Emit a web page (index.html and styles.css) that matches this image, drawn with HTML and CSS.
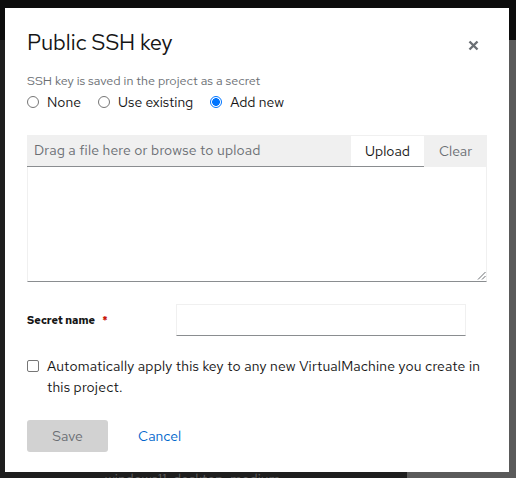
FILE: index.html
```html
<!DOCTYPE html>
<html>
<head>
<meta charset="utf-8">
<link rel="stylesheet" href="styles.css">
</head>
<body>
<div class="page">
  <div class="mast"></div>
  <div class="main">
    <div class="dark-col"><span class="bg-text">windows11-desktop-medium</span></div>
    <div class="light-col"></div>
  </div>
</div>
<div class="modal">
  <div class="modal-head">
    <h1 class="title">Public SSH key</h1>
    <button class="close" aria-label="Close">
      <svg width="11" height="11" viewBox="0 0 11 11"><path d="M1.5 1.5 L9.5 9.5 M9.5 1.5 L1.5 9.5" stroke="#6a6e73" stroke-width="2.4" stroke-linecap="butt"/></svg>
    </button>
  </div>
  <p class="desc">SSH key is saved in the project as a secret</p>
  <div class="radios">
    <label class="radio"><span class="dot"></span>None</label>
    <label class="radio"><span class="dot"></span>Use existing</label>
    <label class="radio"><span class="dot checked"></span>Add new</label>
  </div>
  <div class="upload">
    <div class="upload-bar">
      <div class="filename">Drag a file here or browse to upload</div>
      <div class="btn-upload">Upload</div>
      <div class="btn-clear">Clear</div>
    </div>
    <div class="textarea">
      <svg class="grip" width="9" height="9" viewBox="0 0 9 9"><path d="M8.5 1 L1 8.5 M8.5 5 L5 8.5" stroke="#6a6e73" stroke-width="1"/></svg>
    </div>
  </div>
  <div class="field">
    <div class="label">Secret name <span class="req">*</span></div>
    <div class="input"></div>
  </div>
  <label class="check"><span class="box"></span><span class="check-text">Automatically apply this key to any new VirtualMachine you create in this project.</span></label>
  <div class="actions">
    <button class="save">Save</button>
    <button class="cancel">Cancel</button>
  </div>
</div>
</body>
</html>
```
FILE: styles.css
```css
* { box-sizing: border-box; }
html, body { margin: 0; padding: 0; }
body {
  width: 516px;
  height: 478px;
  overflow: hidden;
  font-family: "Red Hat Text", "Noto Sans", sans-serif;
  background: #1c1c1c;
}
.page {
  display: grid;
  grid-template-rows: 40px 1fr;
  height: 478px;
}
.mast { background: #0c0c0c; }
.main {
  display: grid;
  grid-template-columns: 407px 1fr;
}
.dark-col {
  background: #1e1e1e;
  display: flex;
  align-items: flex-end;
  padding-left: 105px;
}
.bg-text {
  color: #5d5d5d;
  font-size: 14px;
  line-height: 14px;
  margin-bottom: -8px;
}
.light-col { background: #5a5a5a; }

.modal {
  position: absolute;
  left: 5px;
  top: 8px;
  width: 504px;
  height: 464px;
  background: #fff;
  padding: 18px 22px 0 22px;
  color: #151515;
}
.modal-head {
  display: flex;
  align-items: center;
  justify-content: space-between;
  height: 34px;
}
.title {
  margin: 0;
  font-size: 22px;
  font-weight: 400;
  line-height: 34px;
  letter-spacing: -0.1px;
}
.close {
  border: 0;
  background: none;
  padding: 0;
  margin-right: 8px;
  margin-top: 4px;
  width: 11px;
  height: 11px;
  display: flex;
}
.desc {
  margin: 12px 0 0 0;
  font-size: 12.6px;
  line-height: 18px;
  color: #6a6e73;
}
.radios {
  display: flex;
  gap: 17px;
  margin-top: 2px;
  height: 20px;
  align-items: center;
}
.radio {
  display: flex;
  align-items: center;
  gap: 8px;
  font-size: 14px;
  line-height: 20px;
}
.dot {
  width: 12px;
  height: 12px;
  border-radius: 50%;
  border: 1px solid #767676;
  background: #fff;
}
.dot.checked {
  border: 1px solid #0075ff;
  background: radial-gradient(circle, #0075ff 0 3.6px, #fff 4.1px);
}
.upload { margin-top: 23px; }
.upload-bar {
  display: flex;
  height: 32px;
  background: #f0f0f0;
}
.filename {
  flex: 1;
  padding-left: 7px;
  font-size: 14px;
  letter-spacing: 0.15px;
  line-height: 31px;
  color: #6a6e73;
  border-bottom: 1px solid #8a8d90;
}
.btn-upload {
  width: 73px;
  text-align: center;
  background: #fff;
  font-size: 14px;
  line-height: 30px;
  margin-top: 1px;
  border-bottom: 1px solid #8a8d90;
  color: #151515;
}
.btn-clear {
  width: 63px;
  text-align: center;
  font-size: 14px;
  line-height: 32px;
  color: #6a6e73;
}
.textarea {
  height: 115px;
  border: 1px solid #f0f0f0;
  border-top: 0;
  border-bottom: 1px solid #8a8d90;
  display: flex;
  justify-content: flex-end;
  align-items: flex-end;
}
.grip { margin: 0 0 1px 0; }
.field {
  display: flex;
  align-items: center;
  margin-top: 22px;
  height: 32px;
}
.label {
  width: 149px;
  font-size: 11px;
  font-weight: 700;
  color: #151515;
}
.req {
  color: #c9190b;
  margin-left: 5px;
}
.input {
  width: 290px;
  height: 32px;
  border: 1px solid #f0f0f0;
  border-bottom: 1px solid #8a8d90;
}
.check {
  display: flex;
  gap: 8px;
  margin-top: 20px;
  font-size: 14px;
  line-height: 21px;
  color: #151515;
}
.box {
  flex: none;
  width: 12px;
  height: 12px;
  border: 1px solid #767676;
  border-radius: 2px;
  margin-top: 4px;
}
.check-text { width: 440px; letter-spacing: 0.17px; }
.actions {
  display: flex;
  align-items: center;
  gap: 30px;
  margin-top: 22px;
}
.save {
  width: 81px;
  height: 32px;
  border: 0;
  border-radius: 3px;
  background: #d2d2d2;
  color: #6a6e73;
  font-family: inherit;
  font-size: 14px;
}
.cancel {
  border: 0;
  background: none;
  padding: 0;
  color: #0066cc;
  font-family: inherit;
  font-size: 14px;
}
```
